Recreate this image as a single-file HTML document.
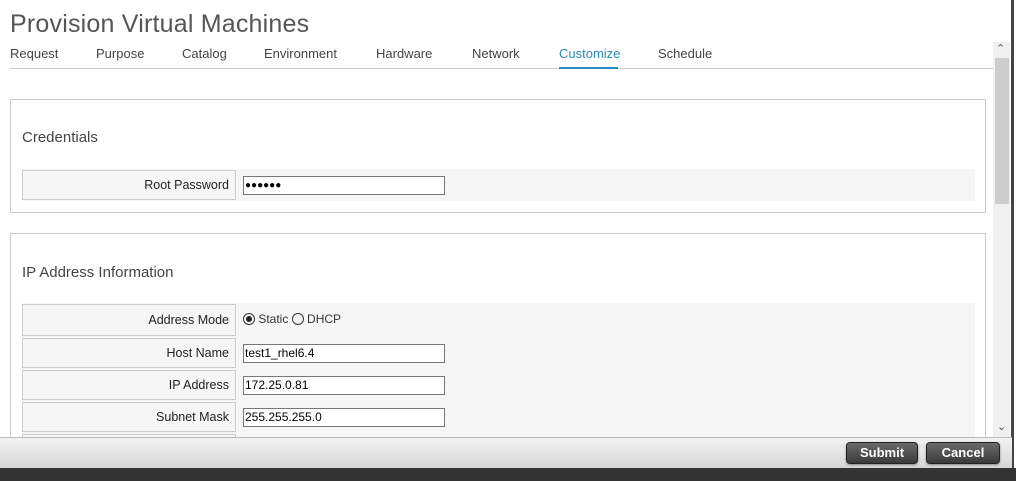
<!DOCTYPE html>
<html><head><meta charset="utf-8"><style>
*{box-sizing:border-box;margin:0;padding:0}
body{width:1016px;height:481px;overflow:hidden;background:#fff;font-family:"Liberation Sans",sans-serif;color:#333;position:relative}
.abs{position:absolute}
h1{position:absolute;left:10px;top:10px;font-weight:normal;font-size:25px;color:#555;letter-spacing:0.2px}
.tab{position:absolute;top:46px;font-size:13px;color:#444}
.panel{position:absolute;left:10px;width:976px;border:1px solid #ccc;background:#fff}
.ptitle{position:absolute;left:11px;font-size:15px;color:#444}
.row{position:absolute;left:11px;width:953px;background:#f6f6f6;height:32px}
.lbl{position:absolute;left:0;top:1px;width:214px;height:30px;border:1px solid #ccc;text-align:right;padding-right:6px;font-size:12.5px;line-height:28px;color:#222}
.inp{position:absolute;left:221px;top:7px;width:202px;height:19px;border:1px solid #777;background:#fff;font-size:12px;line-height:17px;padding-left:1px;color:#000}
.btn{position:absolute;top:442px;height:22px;border-radius:4px;background:linear-gradient(#6a6a6a,#3a3a3a);border:1px solid #222;color:#fff;font-weight:bold;font-size:13px;text-align:center;line-height:20px;box-shadow:0 1px 2px rgba(0,0,0,.4)}
</style></head><body>
<h1>Provision Virtual Machines</h1>
<div class="tab" style="left:10px">Request</div>
<div class="tab" style="left:96px">Purpose</div>
<div class="tab" style="left:182px">Catalog</div>
<div class="tab" style="left:264px">Environment</div>
<div class="tab" style="left:376px">Hardware</div>
<div class="tab" style="left:472px">Network</div>
<div class="tab" style="left:559px;color:#2a8ac4">Customize</div>
<div class="tab" style="left:658px">Schedule</div>
<div class="abs" style="left:10px;top:68px;width:983px;height:1px;background:#ccc"></div>
<div class="abs" style="left:559px;top:67px;width:59px;height:2px;background:#2a8ac4"></div>

<div class="panel" style="top:99px;height:114px">
  <div class="ptitle" style="top:29px">Credentials</div>
  <div class="row" style="top:69px"><div class="lbl">Root Password</div><div class="inp" style="font-size:10px;letter-spacing:0">●●●●●●</div></div>
</div>

<div class="panel" style="top:233px;height:220px">
  <div class="ptitle" style="top:30px">IP Address Information</div>
  <div class="row" style="top:69px;height:34px"><div class="lbl" style="height:32px;line-height:30px">Address Mode</div>
    <div class="abs" style="left:221px;top:8px;font-size:12px;color:#333;line-height:16px">
      <span style="display:inline-block;width:12px;height:12px;border:1px solid #333;border-radius:50%;vertical-align:-2px;position:relative"><span style="position:absolute;left:2px;top:2px;width:6px;height:6px;border-radius:50%;background:#222"></span></span> Static <span style="display:inline-block;width:12px;height:12px;border:1px solid #333;border-radius:50%;vertical-align:-2px"></span> DHCP</div></div>
  <div class="row" style="top:103px"><div class="lbl">Host Name</div><div class="inp">test1_rhel6.4</div></div>
  <div class="row" style="top:135px"><div class="lbl">IP Address</div><div class="inp">172.25.0.81</div></div>
  <div class="row" style="top:167px"><div class="lbl">Subnet Mask</div><div class="inp">255.255.255.0</div></div>
  <div class="row" style="top:199px"><div class="lbl"></div></div>
</div>

<div class="abs" style="left:993px;top:42px;width:17px;height:395px;background:#f0f0f0"></div>
<div class="abs" style="left:995px;top:58px;width:14px;height:146px;background:#cdcdcd"></div>
<div class="abs" style="left:996px;top:42px;font-size:11px;color:#555">&#8963;</div>
<div class="abs" style="left:997px;top:420px;font-size:11px;color:#555">&#8964;</div>
<div class="abs" style="left:1011px;top:0;width:3px;height:470px;background:#444"></div>

<div class="abs" style="left:0;top:437px;width:1012px;height:31px;background:linear-gradient(#f2f2f2,#d6d6d6);border-top:1px solid #bbb"></div>
<div class="abs" style="left:0;top:468px;width:1016px;height:13px;background:#333"></div>
<div class="btn" style="left:846px;width:72px">Submit</div>
<div class="btn" style="left:926px;width:74px">Cancel</div>
</body></html>
